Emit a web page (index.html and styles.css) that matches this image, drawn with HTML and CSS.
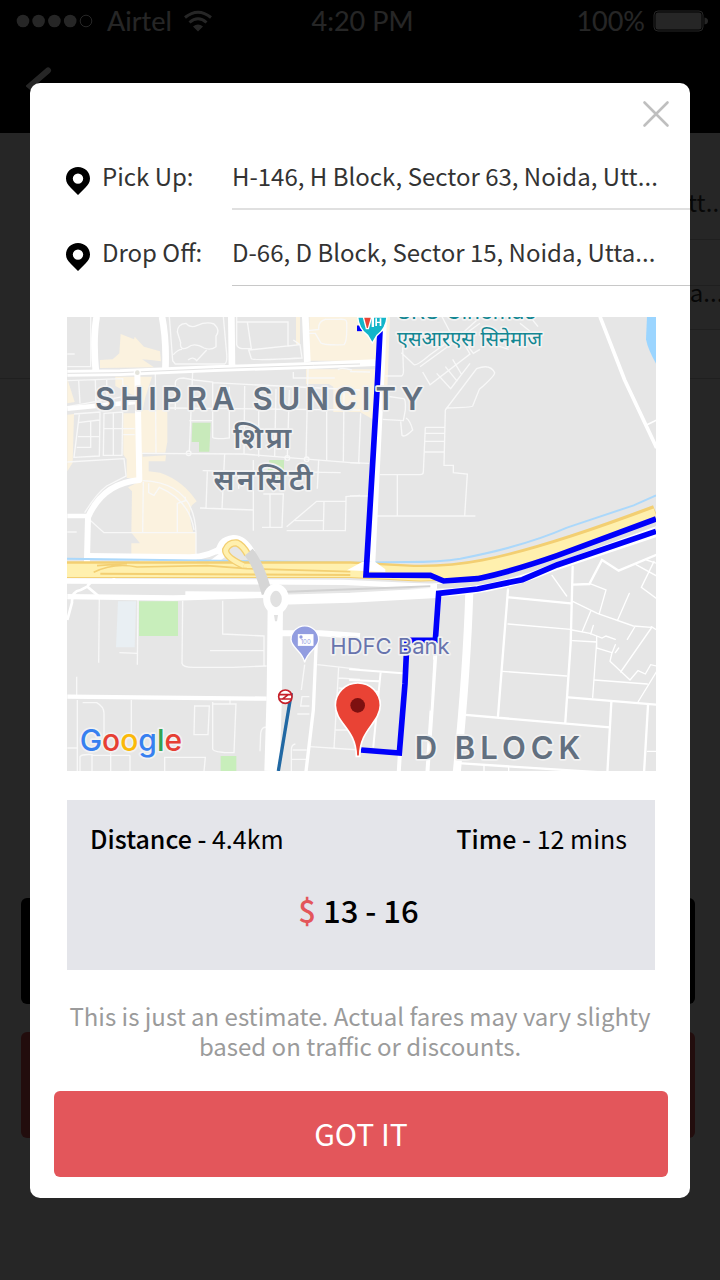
FILE: index.html
```html
<!DOCTYPE html>
<html lang="en">
<head>
  <meta charset="UTF-8">
  <meta name="viewport" content="width=device-width, initial-scale=1">
  <title>Fare Estimate</title>
  <link rel="stylesheet" href="styles.css">
</head>
<body>

  <div class="screen">
    <header class="top">
      <div class="status">
        <div class="status-left">
          <svg class="signal" width="78" height="16" viewBox="0 0 78 16" fill="#fff">
            <circle cx="7" cy="8" r="6.3"/><circle cx="22.6" cy="8" r="6.3"/><circle cx="38.4" cy="8" r="6.3"/><circle cx="54.2" cy="8" r="6.3"/>
            <circle cx="70" cy="8" r="5.8" fill="none" stroke="#fff"/>
          </svg>
          <span>Airtel</span>
          <svg class="wifi" width="30" height="22" viewBox="0 0 30 22" fill="none" stroke="#fff" stroke-width="3">
            <path d="M2 7.5Q15-3 28 7.5"/>
            <path d="M6.5 12.5Q15 5 23.500 12.5"/>
            <path d="M15 21.500L10 16.500Q15 12.500 20 16.500Z" fill="#fff" stroke="none"/>
          </svg>
        </div>
        <span>4:20 PM</span>
        <div class="status-right">
          <span>100%</span>
          <svg class="battery" width="56" height="22" viewBox="0 0 56 22">
            <rect x="1" y="1" width="49" height="20" rx="4" fill="none" stroke="#fff" stroke-width="1"/>
            <rect x="2.500" y="2.500" width="46" height="17" rx="2.500" fill="#fff"/>
            <path d="M51.500 7.500Q55 8 55 11Q55 14 51.500 14.500Z" fill="#fff"/>
          </svg>
        </div>
      </div>
      <svg class="back" width="28" height="36" viewBox="0 0 28 36" fill="none" stroke="#fff" stroke-width="6" stroke-linecap="round">
        <path d="M22 4.500L4 20L22 35"/>
      </svg>
    </header>
    <div class="trip">
      <p class="trip-from">H-146, H Block, Sector 63, Noida, Utt...</p>
      <p class="trip-to">D-66, D Block, Sector 15, Noida, Utta...</p>
    </div>
    <div class="actions">
      <div class="action dark"></div>
      <div class="action red"></div>
    </div>
  </div>

  <div class="overlay">
    <div class="modal" role="dialog" aria-modal="true" aria-label="Fare estimate">
      <div class="modal-head">
        <button class="close" type="button" aria-label="Close">
          <svg width="28" height="28" viewBox="0 0 28 28" stroke="#bfbfbf" stroke-width="2.600" stroke-linecap="round">
            <path d="M2.500 2.500L25.500 25.500M25.500 2.500L2.500 25.500"/>
          </svg>
        </button>
      </div>

      <div class="places">
        <div class="place">
          <svg class="pin" width="24" height="28" viewBox="0 0 24 28">
            <path fill-rule="evenodd" d="M12 0C5.300 0 0 5 0 11.500C0 15.500 2 18 4.500 20.500L12 28L19.500 20.500C22 18 24 15.500 24 11.500C24 5 18.700 0 12 0ZM12 6.400A5.200 5.200 0 1 1 12 16.800A5.200 5.200 0 1 1 12 6.400Z"/>
          </svg>
          <span class="label">Pick Up:</span>
          <span class="address soft">H-146, H Block, Sector 63, Noida, Utt...</span>
        </div>
        <div class="place">
          <svg class="pin" width="24" height="28" viewBox="0 0 24 28">
            <path fill-rule="evenodd" d="M12 0C5.300 0 0 5 0 11.500C0 15.500 2 18 4.500 20.500L12 28L19.500 20.500C22 18 24 15.500 24 11.500C24 5 18.700 0 12 0ZM12 6.400A5.200 5.200 0 1 1 12 16.800A5.200 5.200 0 1 1 12 6.400Z"/>
          </svg>
          <span class="label">Drop Off:</span>
          <span class="address">D-66, D Block, Sector 15, Noida, Utta...</span>
        </div>
      </div>

      <svg class="map" viewBox="0 0 1767 1362" role="img" aria-label="Route map">
        <rect width="1767" height="1362" fill="#e6e6e6"/>

        <!-- north west blocks -->
        <g transform="translate(-21 -21)">
          <g fill="#fbf2df">
            <path d="M120 150L158 148L178 130L182 72L222 88L224 80L252 110L300 124L303 154L272 150L246 148L282 172L120 174Z"/>
            <path d="M748 20H950V152H748ZM708 20H720V104H708ZM738 178H948L942 330L900 306L820 306V230L806 222H738Z"/>
            <path d="M22 206L44 276L22 280ZM22 314L42 312L38 458L22 484ZM166 200H276L256 262L248 300H322V396L316 428H248V440L318 436L316 454H266V484L300 488Q370 512 410 574L396 586Q382 610 400 668H408V766H238V740H214V700H240L214 668L216 544L204 532L240 514L230 504H200V448L190 434V310H230V262L166 228Z"/>
          </g>
          <g fill="#c8eabb">
            <path d="M397 338H452L448 425H417V396H395Z"/>
            <path d="M628 450H672V502L618 510Z"/>
          </g>
          <g fill="none" stroke="#f8f8f8" stroke-width="4">
            <path d="M22 132H44M92 20V170H22M328 20L338 152L346 162H494Q502 158 500 132L490 20M352 66Q352 42 378 40Q392 56 412 46Q440 34 462 42Q482 60 468 78V110Q452 122 432 114Q402 96 384 112Q358 124 362 98ZM340 134Q354 118 366 118M440 120L410 152Q400 138 384 150"/>
            <path d="M530 20V104Q532 114 546 116H574L562 36H530M562 36H684V108L566 120L574 146Q580 152 726 144L720 104L700 90M684 108L720 104M746 70H766L782 98Q790 106 852 104Q862 96 860 36Q860 26 836 28H796Q774 34 776 58L746 62"/>
            <path d="M22 212L188 206L190 274M56 212L60 280M106 210L108 290M140 208L142 290M22 290L190 260M42 312L120 306L118 438L42 442L58 314M54 338L118 330M54 380H118M92 334V412H50M132 310L188 306L186 436H130ZM160 306V434M130 356H224M190 374H224"/>
            <path d="M286 190L288 428M346 300V222Q344 204 370 204L404 210L458 216V382Q460 386 490 386L508 384V230M398 184L388 424M458 218L900 240M322 294L900 300M388 332H456M554 228L552 434M596 230V440M648 236L644 438M688 240L682 440M744 176L738 444M800 230V450M852 240L850 454M246 430L550 432L900 460M700 186V204H824M834 180Q840 170 876 180"/>
            <circle cx="386" cy="430" r="7"/><circle cx="740" cy="448" r="7"/><circle cx="682" cy="444" r="7"/>
            <path d="M428 482L842 488M442 484L438 596M494 432L486 596M580 450V662M420 594L580 600M536 490V536M776 450L772 536M610 552H670L666 652H606M630 552V652M680 650L770 574H858V560L900 556M680 662H856L858 574M792 574L790 662M704 632H790"/>
            <path d="M22 456L192 446L198 498L140 528Q110 550 74 608M250 516L248 666M92 632L132 668H408M248 512Q402 518 408 668V760M266 520V548L282 556L298 532Q388 570 402 660M352 580V668M376 560V572L352 580M22 666H50"/>
          </g>
          <g fill="none" stroke="#fff" stroke-linejoin="round">
            <path stroke-width="20" d="M22 190L180 188L460 176L760 166L945 158M110 20Q98 90 108 190M306 20Q320 90 316 182M514 20L516 180M736 20L742 156"/>
            <path stroke-width="18" d="M232 190L238 510Q128 520 84 622L80 790"/>
            <path stroke-width="14" d="M22 296L228 276M22 618H88"/>
          </g>
          <path fill="none" stroke="#e1e1e1" stroke-width="3" d="M22 190L180 188L460 176L760 166L900 162"/>
          <circle cx="232" cy="188" r="9" fill="#e4e4dc" stroke="#fff" stroke-width="4"/>
        </g>

        <!-- north east blocks -->
        <g transform="translate(849 -21)">
          <path fill="#9bd5ff" d="M891 20H920V164Q894 120 888 88Z"/>
          <path fill="#fbf2df" d="M104 20H120L112 240H100Z"/>
          <g fill="none" stroke="#f8f8f8" stroke-width="4">
            <path d="M106 198H154Q162 196 160 172L158 110M154 128L192 164Q200 168 240 134L330 70M210 170L390 40M218 186L240 224L360 132L346 108M260 190L302 236L360 160M286 170L322 214M308 148L334 192M276 20L300 66M392 20L330 76L370 130L390 118M420 100L476 118M510 40L540 64M540 20L564 50"/>
            <path d="M286 300L380 176Q420 160 434 188Q434 198 388 238L368 288Q366 292 290 294ZM286 300L282 466H310V488L352 492L344 618M226 352H286M224 370H284M222 394H284M222 426H282M226 352L220 486Q220 494 210 494H90M142 494V618M80 618H376"/>
            <path d="M106 258L160 266Q168 266 166 300L160 332L98 328M152 334L156 376Q164 384 188 360Q180 330 168 324M32 310L26 460M0 458L58 460M0 558H56M0 185L60 186"/>
          </g>
          <path fill="none" stroke="#fff" stroke-width="11" d="M750 20L824 210L920 414"/>
          <path fill="none" stroke="#fff" stroke-width="5" d="M888 346L920 330"/>
        </g>

        <!-- south west blocks -->
        <g transform="translate(-21 639)">
          <path fill="#e9eff3" d="M174 214H228L224 352H168Z"/>
          <path fill="#c8eebb" d="M237 214H354V318H237ZM482 678H529V724H482Z"/>
          <g fill="none" stroke="#f8f8f8" stroke-width="4">
            <path d="M118 200L116 398M234 210L232 404M178 368L232 370M368 212L366 400Q368 412 400 412L520 412L620 408M488 212V312L612 318V408M450 362H612M50 440V500M68 518H110Q132 530 132 550V640M214 510V620M404 528H448L444 614H402ZM458 516V656Q458 668 522 668L528 520M510 510V520M460 522H528M620 592Q604 590 602 610L600 664"/>
            <path d="M22 654H50M52 510V724M60 724V680Q66 672 96 674V724M96 676H210M152 670V724M210 676V724M314 724V682H436L432 724"/>
            <path d="M772 404L900 418M734 404L724 480M836 410L822 656M750 650L900 660M836 444L900 448M836 474L900 480M826 600H880M694 724V660Q694 644 706 642M698 660H740M696 688H740M748 500H726L722 528H748M712 552H748"/>
          </g>
          <g fill="none" stroke="#fff">
            <path stroke-width="16" d="M22 200L340 204L620 196"/>
            <path stroke-width="13" d="M22 500L620 506M376 190L620 192"/>
            <path stroke-width="8" d="M22 270L36 218Q34 184 62 180L82 170L118 200M82 168L96 154L160 152L170 116"/>
            <path stroke-width="18" d="M84 78L390 82Q450 80 490 50M430 118L492 72"/>
            <path stroke-width="10" d="M770 310L760 540L738 724"/>
            <path stroke-width="18" d="M660 310H780L900 318"/>
          </g>
        </g>

        <!-- south east blocks -->
        <g transform="translate(849 549)">
          <g fill="none" stroke="#fff" stroke-linecap="round">
            <path stroke-width="7" d="M474 268L444 648M668 200L662 430L646 666M478 292L662 310M338 644L780 682M656 592L920 614M784 606L772 820M894 616L882 820M336 790L920 828M670 254L718 252L756 180L806 212L920 164"/>
            <path stroke-width="4" d="M474 372L662 388M458 514L650 528M606 226L650 288M668 304L742 340L850 378L904 382M718 250L768 270L748 340M838 280L802 362M722 334L696 396M730 376L722 402M666 390L720 400L756 414L768 408L796 418M668 422L740 426L728 592M740 410V444L786 458L780 484L840 540M904 384L812 516M856 378L832 418M796 434L784 464M806 444L796 458M734 540L892 552M840 540L864 512L886 522L902 494L920 498M864 606L920 514M858 194L920 228M890 180L920 190M912 184L874 262L920 296M892 754H920M402 794V820M476 800V820M904 380L920 390"/>
            <path stroke-width="6" d="M0 508L158 520M0 540L86 544M92 516L70 740M0 575H86"/>
            <path stroke-width="24" stroke-linecap="butt" d="M358 278Q350 520 320 820"/>
            <path stroke-width="12" d="M268 284L232 820M168 470L146 820"/>
            <path stroke-width="4" stroke="#e6e6e6" d="M248 480L240 630"/>
          </g>
        </g>

        <!-- canal, highway, junction -->
        <g fill="none">
          <path stroke="#abd8fb" stroke-width="6" d="M0 725L850 737L1020 735Q1120 735 1180 725Q1370 689 1500 632L1700 565L1767 535"/>
          <path stroke="#fff" stroke-width="16" d="M0 792L830 796L1040 806Q1150 812 1260 790Q1450 750 1767 622"/>
          <path stroke="#f3cf72" stroke-width="50" d="M0 758L850 758L1040 768Q1150 770 1250 750Q1440 712 1767 588"/>
          <path stroke="#fff0ae" stroke-width="40" d="M0 760L850 760L1040 770Q1150 772 1250 753Q1440 716 1767 593"/>
          <path stroke="#f3cf72" stroke-width="5" d="M80 766Q140 736 210 750L420 746Q480 750 540 755L850 764M90 746L180 740"/>
          <path stroke="#f3cf72" stroke-width="6" d="M100 770L850 774"/>
          <path stroke="#fff" stroke-width="32" d="M462 712Q462 674 500 670Q528 670 550 710"/>
          <path stroke="#f3cf72" stroke-width="22" d="M530 746Q474 720 476 698Q486 676 510 678Q526 684 542 712"/>
          <path stroke="#fff0ae" stroke-width="14" d="M530 746Q474 720 476 698Q486 676 510 678Q526 684 542 712"/>
          <path stroke="#d6d6d6" stroke-width="32" d="M545 706Q575 740 600 830"/>
          <path stroke="#d2d2d2" stroke-width="6" d="M660 824L1090 808"/>
          <path stroke="#fff" stroke-width="30" d="M640 848L850 842L1110 828"/>
          <path stroke="#fff" stroke-width="46" d="M625 870L622 1130L615 1362"/>
          <path stroke="#fff" stroke-width="18" d="M951 0L946 120L916 735"/>
          <path fill="#fff" stroke="none" d="M840 760L885 735H925L955 757V765Z"/>
          <path stroke="#fff" stroke-width="40" d="M1100 820Q1290 816 1450 745L1767 640"/>
          <path stroke="#e0e0e0" stroke-width="14" d="M1110 808Q1270 806 1440 740L1767 620"/>
        </g>
        <ellipse cx="627" cy="846" rx="28" ry="35" fill="#e1e1e1" stroke="#fff" stroke-width="21"/>
        <path fill="#e1e1e1" d="M621 894H633L630 913H624Z"/>

        <!-- route -->
        <path class="route-line" d="M939 42L930 220L897 774L1090 775L1130 792L1232 785Q1330 765 1470 716L1767 606"/>
        <path class="route-line" d="M1767 643L1470 744L1366 788L1232 816L1115 829L1105 970H1020L1014 1100L997 1308L882 1299"/>
        <path class="route-line" d="M870 34L885 34"/>
        <path fill="none" stroke="#2168a3" stroke-width="10" d="M673 1128L634 1362"/>
        <g fill="#fff" stroke="#c5202a" stroke-width="5">
          <circle cx="655" cy="1139" r="20"/>
          <path d="M636 1133H674M636 1146H674M665 1132L645 1147" fill="none"/>
        </g>

        <!-- place markers -->
        <path fill="#12b5c9" stroke="#fff" stroke-width="4" d="M872 0Q875 36 902 55L916 78L930 55Q957 36 960 0Z"/>
        <path fill="#fff" d="M914 0H921V30H914ZM925 4H930V14H938V4H943V27H938V18H930V27H925Z"/>
        <path fill="#e94335" stroke="#fff" stroke-width="4" d="M889 0L898 35H904L914 0Z"/>
        <path fill="#929de0" stroke="#fff" stroke-width="4" d="M713 1036C706 1002 674 994 672 968A41 41 0 1 1 755 968C754 994 721 1002 713 1036Z"/>
        <rect x="694" y="953" width="44" height="32" fill="#fff" stroke="#fff" stroke-width="3"/>
        <circle cx="702" cy="960" r="5" fill="#929de0"/>
        <text class="note-value" x="701" y="981">100</text>
        <path fill="#e94335" stroke="#fff" stroke-width="5" d="M868 1318C868 1236 806 1220 805 1165A67 67 0 0 1 940 1165C938 1220 878 1236 878 1318Z"/>
        <circle cx="872" cy="1165" r="22" fill="#7d1010"/>

        <text class="area" x="84" y="278">SHIPRA SUNCITY</text>
        <text class="area hindi" x="590" y="394">शिप्रा</text>
        <text class="area hindi" x="592" y="519">सनसिटी</text>
        <text class="area" x="1043" y="1326">D BLOCK</text>
        <text class="spot teal" x="990" y="7">SRS Cinemas</text>
        <text class="spot teal hindi-small" x="990" y="88">एसआरएस सिनेमाज</text>
        <text class="spot violet" x="790" y="1012">HDFC Bank</text>
        <text class="brand" x="38" y="1301"><tspan fill="#3780f0">G</tspan><tspan fill="#e63f33">o</tspan><tspan fill="#fbb90a">o</tspan><tspan fill="#3780f0">g</tspan><tspan fill="#32a350">l</tspan><tspan fill="#e63f33">e</tspan></text>
      </svg>

      <div class="summary">
        <div class="facts">
          <span><b>Distance -</b> 4.4km</span>
          <span><b>Time -</b> 12 mins</span>
        </div>
        <p class="price"><span>$</span> 13 - 16</p>
      </div>

      <p class="disclaimer">This is just an estimate. Actual fares may vary slighty based on traffic or discounts.</p>

      <button class="confirm" type="button">GOT IT</button>
    </div>
  </div>

</body>
</html>
```
FILE: styles.css
```css
* {
  box-sizing: border-box;
}

body {
  margin: 0;
  font-family: "Noto Sans CJK SC", "Noto Sans", sans-serif;
  font-size: 24px;
  line-height: 32px;
  color: #333;
  background: #fff;
}

p {
  margin: 0;
}

button {
  border: 0;
  font: inherit;
  cursor: pointer;
}

svg {
  display: block;
  flex: none;
}

.screen {
  min-height: 100vh;
  overflow: hidden;
}

.top {
  height: 133px;
  background: #000;
  color: #fff;
}

.status {
  display: grid;
  grid-template-columns: 1fr auto 1fr;
  align-items: center;
  padding: 5px 11px 0 16px;
  font-family: Lato, sans-serif;
  font-size: 27px;
}

.status-left,
.status-right {
  display: flex;
  align-items: center;
}

.signal {
  margin-right: 13px;
}

.wifi {
  margin-left: 11px;
}

.status-right {
  justify-content: flex-end;
}

.battery {
  margin-left: 8px;
}

.back {
  margin: 29px 0 0 26px;
}

.trip {
  padding: 52px 0 48px 300px;
  white-space: nowrap;
  border-bottom: 1px solid #ccc;
}

.trip-from {
  height: 55px;
  line-height: 34px;
  border-bottom: 1px solid #ccc;
}

.trip-to {
  height: 45px;
  margin-top: 45px;
  line-height: 12px;
  border-top: 1px solid #ccc;
  border-bottom: 1px solid #ccc;
}

.actions {
  display: grid;
  gap: 28px;
  padding: 519px 25px 0 21px;
}

.action {
  height: 106px;
  border-radius: 6px;
}

.action.dark {
  background: #000;
}

.action.red {
  background: #e3565b;
}

.overlay {
  position: absolute;
  inset: 0;
  padding: 83px 30px;
  background: rgba(0, 0, 0, 0.85);
}

.modal {
  overflow: hidden;
  padding-bottom: 21px;
  border-radius: 10px;
  background: #fff;
}

.modal-head {
  display: flex;
  justify-content: flex-end;
  padding: 17px 20px 32px;
}

.close {
  padding: 0;
  background: none;
}

.places {
  display: grid;
  gap: 26px;
  padding-left: 36px;
}

.place {
  display: grid;
  grid-template-columns: 36px 130px 1fr;
}

.pin {
  margin-top: 7px;
}

.address {
  padding-bottom: 17px;
  border-bottom: 1px solid #c8c8c8;
  white-space: nowrap;
}

.address.soft {
  padding-bottom: 16px;
  border-bottom: 2px solid #e0e0e0;
}

.map {
  width: calc(100% - 71px);
  height: auto;
  margin: 31px 34px 0 37px;
}

.route-line {
  fill: none;
  stroke: #0000fb;
  stroke-width: 17px;
}

.map text {
  paint-order: stroke;
  stroke: #f2f2f2;
  stroke-width: 10px;
  stroke-linejoin: round;
}

.area {
  font-family: Inter, "Noto Sans", sans-serif;
  font-size: 93px;
  font-weight: 600;
  letter-spacing: 15px;
  fill: #627080;
}

.area.hindi {
  font-size: 88px;
  letter-spacing: 8px;
  text-anchor: middle;
}

.spot {
  font-family: Inter, "Noto Sans", sans-serif;
  font-size: 66px;
}

.spot.hindi-small {
  font-size: 60px;
}

.teal {
  fill: #138793;
}

.violet {
  fill: #6874ad;
}

.map .note-value {
  font-family: Inter, sans-serif;
  font-size: 18px;
  fill: #929de0;
  stroke: none;
}

.brand {
  font-family: Inter, sans-serif;
  font-size: 90px;
  font-weight: 500;
}

.summary {
  margin: 29px 35px 0 37px;
  padding: 22px 28px 40px 23px;
  background: #e4e5ea;
  color: #000;
}

.facts {
  display: flex;
  justify-content: space-between;
  font-size: 25px;
}

.facts b,
.price {
  font-weight: 500;
}

.price {
  margin-top: 36px;
  font-size: 31px;
  line-height: 40px;
  text-align: center;
}

.price span {
  color: #e3565b;
}

.disclaimer {
  margin: 31px 36px 0;
  line-height: 30px;
  text-align: center;
  color: #9b9b9b;
}

.confirm {
  display: block;
  width: calc(100% - 46px);
  height: 86px;
  margin: 30px 22px 0 24px;
  padding-bottom: 4px;
  border-radius: 6px;
  background: #e3565b;
  color: #fff;
  font-size: 30px;
}
```
